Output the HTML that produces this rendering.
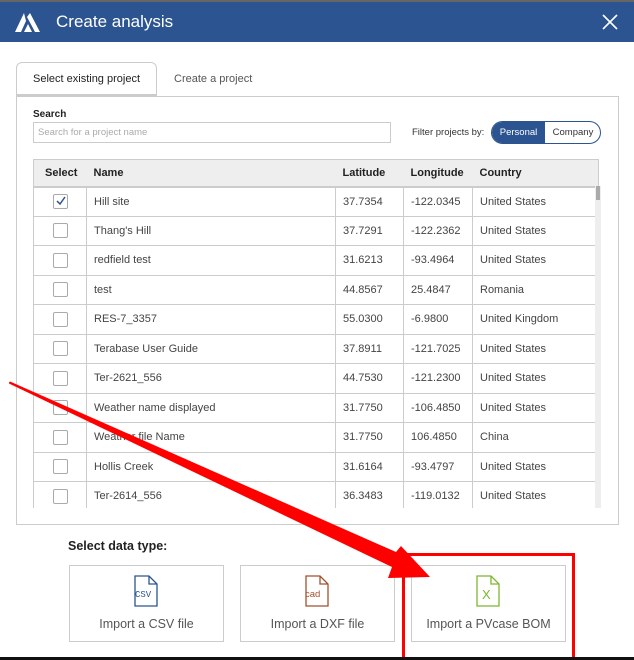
<!DOCTYPE html>
<html><head><style>
*{margin:0;padding:0;box-sizing:border-box}
body{width:634px;height:660px;overflow:hidden;background:#fff;font-family:"Liberation Sans",sans-serif;position:relative;color:#333}
.abs{position:absolute}
.hdr{left:0;top:0;width:634px;height:42px;background:#2b5490;border-top:2px solid #666}
.hdr .t{left:56px;top:10px;color:#fff;font-size:17px}
.tab{left:16px;top:62px;width:141px;height:35px;border:1px solid #ccc;border-bottom:3px solid #ccc;border-radius:6px 6px 0 0;font-size:11px;color:#222;text-align:center;line-height:33px;background:#fff}
.tab2{left:174px;top:73px;font-size:11px;color:#555}
.panel{left:16px;top:96px;width:603px;height:429px;border:1px solid #ccc}
table{position:absolute;left:33px;top:159px;width:568px;border-collapse:collapse;font-size:11px}
th{height:27px;background:#efeeee;text-align:left;font-weight:bold;color:#222;border-top:1px solid #ccc;border-bottom:2px solid #ccc;padding-left:7px}
th:first-child{border-left:1px solid #ccc}
th:last-child{border-right:1px solid #ccc}
td{height:29.5px;border-right:1px solid #ccc;border-bottom:1px solid #ccc;padding-left:7px;color:#444}
td:first-child{border-left:1px solid #ccc;padding:0;text-align:center}
td:last-child{border-right:6px solid #eee}
.cb{display:inline-block;width:15px;height:15px;border:1.5px solid #aaa;border-radius:2px;vertical-align:middle;position:relative}
.card{top:565px;width:155px;height:77px;border:1px solid #ccc;font-size:12.5px;color:#555;text-align:center}
.card span{position:absolute;left:0;right:0;top:51px}
.card svg{position:absolute;left:64px;top:9px}
</style></head><body>
<div class="abs hdr">
<svg class="abs" style="left:15px;top:11px" width="25" height="20" viewBox="0 0 25 20"><path d="M9 0 L0 19 H6 L11 8 Z M12 4 L20 19 H25 L15 0 Z M13 11 L9 19 H17 Z" fill="#fff"/></svg>
<div class="abs t">Create analysis</div>
<svg class="abs" style="left:602px;top:12px" width="16" height="16"><path d="M1 1L15 15M15 1L1 15" stroke="#fff" stroke-width="1.6"/></svg>
</div>
<div class="abs panel"></div>
<div class="abs tab">Select existing project</div>
<div class="abs tab2">Create a project</div>
<div class="abs" style="left:33px;top:109px;font-size:10px;font-weight:bold;color:#222">Search</div>
<div class="abs" style="left:33px;top:122px;width:358px;height:21px;border:1px solid #ccc;font-size:9.5px;color:#aaa;padding:4px 4px">Search for a project name</div>
<div class="abs" style="left:412px;top:127px;font-size:9.5px;color:#333">Filter projects by:</div>
<div class="abs" style="left:491px;top:121px;width:110px;height:23px;border:1px solid #2b5490;border-radius:12px;overflow:hidden;font-size:9.5px">
<div class="abs" style="left:0;top:0;width:53px;height:21px;background:#2b5490;color:#fff;text-align:center;line-height:21px">Personal</div>
<div class="abs" style="left:53px;top:0;width:56px;height:21px;color:#333;text-align:center;line-height:21px">Company</div></div>
<table>
<tr><th style="width:53px;padding-left:11px">Select</th><th style="width:249px">Name</th><th style="width:68px">Latitude</th><th style="width:69px">Longitude</th><th>Country</th></tr>
<tr><td><span class="cb"><svg class="abs" style="left:1px;top:0" width="12" height="12"><path d="M2 6L5 9L10 2" stroke="#2b5490" stroke-width="1.5" fill="none"/></svg></span></td><td>Hill site</td><td>37.7354</td><td>-122.0345</td><td>United States</td></tr>
<tr><td><span class="cb"></span></td><td>Thang's Hill</td><td>37.7291</td><td>-122.2362</td><td>United States</td></tr>
<tr><td><span class="cb"></span></td><td>redfield test</td><td>31.6213</td><td>-93.4964</td><td>United States</td></tr>
<tr><td><span class="cb"></span></td><td>test</td><td>44.8567</td><td>25.4847</td><td>Romania</td></tr>
<tr><td><span class="cb"></span></td><td>RES-7_3357</td><td>55.0300</td><td>-6.9800</td><td>United Kingdom</td></tr>
<tr><td><span class="cb"></span></td><td>Terabase User Guide</td><td>37.8911</td><td>-121.7025</td><td>United States</td></tr>
<tr><td><span class="cb"></span></td><td>Ter-2621_556</td><td>44.7530</td><td>-121.2300</td><td>United States</td></tr>
<tr><td><span class="cb"></span></td><td>Weather name displayed</td><td>31.7750</td><td>-106.4850</td><td>United States</td></tr>
<tr><td><span class="cb"></span></td><td>Weather file Name</td><td>31.7750</td><td>106.4850</td><td>China</td></tr>
<tr><td><span class="cb"></span></td><td>Hollis Creek</td><td>31.6164</td><td>-93.4797</td><td>United States</td></tr>
<tr><td><span class="cb"></span></td><td>Ter-2614_556</td><td>36.3483</td><td>-119.0132</td><td>United States</td></tr>
</table>
<div class="abs" style="left:0;top:508px;width:634px;height:16px;background:#fff"></div>
<div class="abs" style="left:16px;top:508px;width:603px;height:17px;border:1px solid #ccc;border-top:none"></div>
<div class="abs" style="left:596px;top:186px;width:4px;height:14px;background:#aaa"></div>
<div class="abs" style="left:68px;top:539px;font-size:12.5px;font-weight:bold;color:#222">Select data type:</div>
<div class="abs card" style="left:69px"><svg width="24" height="32"><path d="M1 1H15L23 9V31H1Z M15 1V9H23" stroke="#2b5490" fill="none" stroke-width="1.3"/><text x="1" y="22" font-size="9" font-family="Liberation Mono" fill="#2b5490">CSV</text></svg><span>Import a CSV file</span></div>
<div class="abs card" style="left:240px"><svg width="24" height="32"><path d="M1 1H15L23 9V31H1Z M15 1V9H23" stroke="#a0522d" fill="none" stroke-width="1.3"/><text x="0" y="22" font-size="9.5" font-family="Liberation Sans" fill="#a0522d">cad</text></svg><span>Import a DXF file</span></div>
<div class="abs card" style="left:411px"><svg width="24" height="32"><path d="M1 1H15L23 9V31H1Z M15 1V9H23" stroke="#7cb82f" fill="none" stroke-width="1.3"/><text x="6" y="24" font-size="13" font-family="Liberation Sans" fill="#7cb82f">X</text></svg><span>Import a PVcase BOM</span></div>
<div class="abs" style="left:402px;top:553px;width:173px;height:107px;border:3px solid #f00"></div>
<div class="abs" style="left:0;top:657px;width:634px;height:3px;background:#111"></div>
<svg class="abs" style="left:0;top:0" width="634" height="660"><polygon points="9,382.5 10,381.5 396,552 401,546 430,577 388,578 392,567 9,383.5" fill="#f00"/></svg>
</body></html>
